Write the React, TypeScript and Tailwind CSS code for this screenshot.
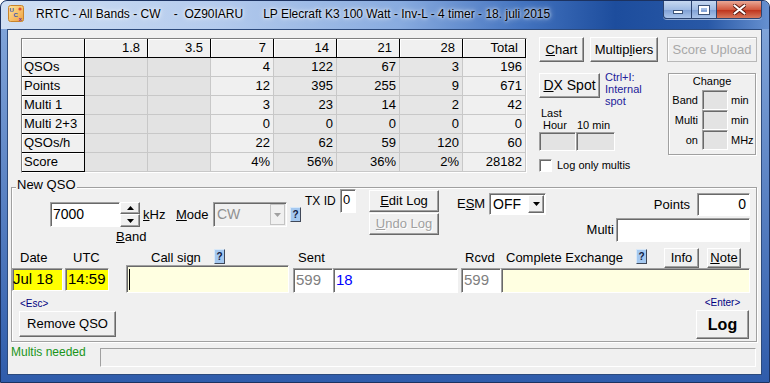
import React from "react";

const raised =
  "bg-[#f0f0f0] border border-t-white border-l-white border-r-[#696969] border-b-[#696969] shadow-[inset_-1px_-1px_0_#a0a0a0]";
const sunken =
  "border border-t-[#a0a0a0] border-l-[#a0a0a0] border-r-white border-b-white shadow-[inset_1px_1px_0_#696969]";
const etched = "border border-[#a0a0a0] shadow-[inset_1px_1px_0_#fff,1px_1px_0_#fff]";
const fixedCell =
  "h-[19px] flex items-center bg-[#f0f0f0] border-r border-b border-r-black border-b-black shadow-[inset_1px_1px_0_#fff]";
const dataCell = "h-[19px] flex items-center justify-end pr-[3px] border-r border-b border-[#c8c8c8]";
const grayText = "text-[#a0a0a0] [text-shadow:1px_1px_0_#fff]";

const bands = ["1.8", "3.5", "7", "14", "21", "28", "Total"];
const colBg = [
  "bg-[#e3e3e3]",
  "bg-[#e3e3e3]",
  "bg-[#f0f0f0]",
  "bg-[#e6e6e6]",
  "bg-[#e6e6e6]",
  "bg-[#e6e6e6]",
  "bg-[#f0f0f0]",
];

const stats = [
  { label: "QSOs", vals: ["", "", "4", "122", "67", "3", "196"] },
  { label: "Points", vals: ["", "", "12", "395", "255", "9", "671"] },
  { label: "Multi 1", vals: ["", "", "3", "23", "14", "2", "42"] },
  { label: "Multi 2+3", vals: ["", "", "0", "0", "0", "0", "0"] },
  { label: "QSOs/h", vals: ["", "", "22", "62", "59", "120", "60"] },
  { label: "Score", vals: ["", "", "4%", "56%", "36%", "2%", "28182"] },
];

function Help({ className = "" }: { className?: string }) {
  return (
    <div
      className={`w-[11px] h-[15px] shrink-0 flex items-center justify-center bg-[#a4c8f0] border border-t-[#d8e8f8] border-l-[#d8e8f8] border-r-[#404858] border-b-[#404858] text-[10px] font-bold leading-none text-[#101840] ${className}`}
    >
      ?
    </div>
  );
}

function Arrow({ color = "#000" }: { color?: string }) {
  return (
    <svg width="7" height="4" viewBox="0 0 7 4">
      <path d="M0 0h7L3.5 4z" fill={color} />
    </svg>
  );
}

function TitleBar() {
  return (
    <div className="h-[28px] flex items-start shrink-0 rounded-t-[6px] bg-[linear-gradient(90deg,#d0dff3_0%,#b4cbed_28%,#88abdf_52%,#4373bf_68%,#1d4d9d_80%,#2858a6_92%,#6690d0_100%)]">
      <svg className="ml-[7px] mt-[4px]" width="16" height="17" viewBox="0 0 16 17">
        <defs>
          <linearGradient id="ic" x1="0" y1="0" x2="1" y2="1">
            <stop offset="0" stopColor="#fde59a" />
            <stop offset="1" stopColor="#f0a040" />
          </linearGradient>
        </defs>
        <rect x="0.5" y="0.5" width="15" height="16" rx="2" fill="url(#ic)" stroke="#c8842c" />
        <circle cx="12" cy="4" r="1.6" fill="#e04830" />
        <text x="1.5" y="7" fontSize="6" fontWeight="bold" fill="#3454b4" fontFamily="Liberation Sans">U</text>
        <text x="5.5" y="12" fontSize="6" fontWeight="bold" fill="#3454b4" fontFamily="Liberation Sans">C</text>
        <text x="10.5" y="16" fontSize="6" fontWeight="bold" fill="#7a2c9c" fontFamily="Liberation Sans">x</text>
      </svg>
      <div className="ml-[12px] mt-[6px] text-[12px] leading-[14px] whitespace-pre [text-shadow:0_0_6px_#fff,0_0_3px_#fff]">
        {"RRTC - All Bands - CW    -  OZ90IARU      LP Elecraft K3 100 Watt - Inv-L - 4 timer - 18. juli 2015"}
      </div>
      <div className="ml-auto mr-[7px] flex h-[18px] rounded-b-[4px] border border-t-0 border-[#2c4470] overflow-hidden shadow-[0_1px_0_rgba(255,255,255,0.5)]">
        <div className="w-[28px] h-full flex items-end justify-center pb-[4px] border-r border-[#2c4470] bg-[linear-gradient(#c6d8f0,#a0bbe3_50%,#7e9fd4_51%,#aac4ea)]">
          <div className="w-[10px] h-[4px] bg-white border border-[#3c5378]" />
        </div>
        <div className="w-[25px] h-full flex items-center justify-center border-r border-[#2c4470] bg-[linear-gradient(#c6d8f0,#a0bbe3_50%,#7e9fd4_51%,#aac4ea)]">
          <div className="w-[10px] h-[8px] border-2 border-white shadow-[0_0_0_1px_#3c5378]" />
        </div>
        <div className="w-[44px] h-full flex items-center justify-center bg-[linear-gradient(#e9a896,#d25a40_50%,#bd2f18_51%,#d77a5e)]">
          <svg width="13" height="11" viewBox="0 0 13 11">
            <path d="M1.5 1.5l10 8M11.5 1.5l-10 8" stroke="#5a1a10" strokeWidth="4" strokeLinecap="round" />
            <path d="M1.5 1.5l10 8M11.5 1.5l-10 8" stroke="#fff" strokeWidth="2.2" strokeLinecap="round" />
          </svg>
        </div>
      </div>
    </div>
  );
}

function StatsTable() {
  return (
    <div className="ml-[13px] mt-[8px] self-start grid grid-cols-[repeat(8,63px)] border border-t-[#808080] border-l-[#808080] border-r-white border-b-white">
      <div className={fixedCell} />
      {bands.map((b) => (
        <div key={b} className={`${fixedCell} justify-end pr-[7px]`}>
          {b}
        </div>
      ))}
      {stats.map((r) => (
        <React.Fragment key={r.label}>
          <div className={`${fixedCell} pl-[2px]`}>{r.label}</div>
          {r.vals.map((v, i) => (
            <div key={i} className={`${dataCell} ${colBg[i]}`}>
              {v}
            </div>
          ))}
        </React.Fragment>
      ))}
    </div>
  );
}

function RightPanel() {
  return (
    <div className="ml-[12px] mt-[7px] w-[218px]">
      <div className="flex">
        <div className={`${raised} w-[45px] h-[25px] flex items-center justify-center`}>
          <u>C</u>hart
        </div>
        <div className={`${raised} ml-[6px] w-[68px] h-[25px] flex items-center justify-center`}>
          Multip<u>l</u>iers
        </div>
        <div className="ml-[9px] w-[90px] h-[25px] flex items-center justify-center border border-[#b8b8b8] shadow-[inset_1px_1px_0_#fff] text-[#a8a8a8]">
          Score Upload
        </div>
      </div>
      <div className="flex mt-[11px]">
        <div className="w-[129px]">
          <div className="flex h-[25px]">
            <div className={`${raised} w-[61px] h-[25px] flex items-center justify-center text-[14px]`}>
              <u>D</u>X Spot
            </div>
            <div className="ml-[5px] -mt-[2px] text-[11px] leading-[12px] text-[#22229a]">
              Ctrl+I:
              <br />
              Internal
              <br />
              spot
            </div>
          </div>
          <div className="mt-[9px] pl-[2px] text-[11px] leading-[12px]">Last</div>
          <div className="flex text-[11px] leading-[12px]">
            <span className="w-[38px] pl-[4px]">Hour</span>
            <span>10 min</span>
          </div>
          <div className="flex mt-[1px]">
            <div className={`${sunken} w-[37px] h-[19px] bg-[#e3e3e3]`} />
            <div className={`${sunken} w-[39px] h-[19px] bg-[#e3e3e3]`} />
          </div>
          <div className="flex items-center mt-[8px]">
            <div className={`${sunken} w-[13px] h-[13px] bg-white`} />
            <span className="ml-[5px] text-[11px] leading-[13px]">Log only multis</span>
          </div>
        </div>
        <div className={`${etched} w-[88px] h-[82px] text-[11px] leading-[12px]`}>
          <div className="text-center pt-[1px]">Change</div>
          <div className="mt-[3px]">
            {[
              ["Band", "min"],
              ["Multi", "min"],
              ["on", "MHz"],
            ].map(([l, u]) => (
              <div key={l} className="flex items-center h-[20px]">
                <span className="w-[33px] text-right pr-[4px]">{l}</span>
                <div className={`${sunken} w-[26px] h-[20px] bg-[#e3e3e3]`} />
                <span className="ml-[3px]">{u}</span>
              </div>
            ))}
          </div>
        </div>
      </div>
    </div>
  );
}

function NewQso() {
  return (
    <div className={`relative ml-[3px] w-[746px] h-[155px] ${etched}`}>
      <span className="absolute left-[4px] -top-[11px] px-[1px] bg-[#f0f0f0] leading-[16px]">New QSO</span>

      {/* frequency, mode, tx id, log buttons, esm, points */}
      <div className="flex h-[60px]">
        <div className="w-[164px] pl-[38px] pt-[14px]">
          <div className="flex items-center">
            <div className={`${sunken} w-[70px] h-[25px] bg-white flex items-center pl-[2px] text-[14px]`}>7000</div>
            <div className="w-[20px] h-[25px] flex flex-col">
              <div className={`${raised} h-[12px] flex items-center justify-center`}>
                <svg width="7" height="4" viewBox="0 0 7 4">
                  <path d="M0 4h7L3.5 0z" fill="#000" />
                </svg>
              </div>
              <div className={`${raised} h-[13px] flex items-center justify-center`}>
                <Arrow />
              </div>
            </div>
            <span className="ml-[3px]">
              <u>k</u>Hz
            </span>
          </div>
          <div className="ml-[66px] mt-[3px] leading-[14px]">
            <u>B</u>and
          </div>
        </div>

        <div className="w-[129px] pt-[14px] flex items-start">
          <div className="w-[37px] h-[25px] flex items-center">
            <u>M</u>ode
          </div>
          <div className={`${sunken} w-[74px] h-[25px] bg-[#f0f0f0] flex items-center`}>
            <span className="flex-1 pl-[3px] text-[14px] text-[#909090]">CW</span>
            <div className="w-[15px] h-[21px] mr-[1px] flex items-center justify-center border border-[#c4c4c4] bg-[#f0f0f0]">
              <Arrow color="#a0a0a0" />
            </div>
          </div>
          <Help className="ml-[3px] mt-[5px]" />
        </div>

        <div className="w-[64px] pt-[1px] flex items-start">
          <span className="w-[35px] mt-[5px] leading-[14px] text-[12px]">TX ID</span>
          <div className={`${sunken} w-[16px] h-[24px] bg-white pl-[2px] pt-[2px] text-[13px] leading-[16px]`}>0</div>
        </div>

        <div className="w-[88px] pt-[2px] flex flex-col">
          <div className={`${raised} w-[70px] h-[22px] flex items-center justify-center`}>
            <u>E</u>dit Log
          </div>
          <div className={`${raised} mt-[1px] w-[70px] h-[22px] flex items-center justify-center ${grayText}`}>
            <u>U</u>ndo Log
          </div>
        </div>

        <div className="w-[126px] pt-[5px] flex items-start">
          <div className="w-[32px] h-[22px] flex items-center">
            E<u>S</u>M
          </div>
          <div className={`${sunken} w-[57px] h-[22px] bg-white flex items-center`}>
            <span className="flex-1 pl-[3px] text-[14px]">OFF</span>
            <div className={`${raised} w-[16px] h-[18px] mr-[1px] flex items-center justify-center`}>
              <Arrow />
            </div>
          </div>
        </div>

        <div className="w-[167px] pt-[5px] flex flex-col">
          <div className="flex justify-end items-center">
            <span className="mr-[7px]">Points</span>
            <div className={`${sunken} w-[53px] h-[23px] bg-white flex items-center justify-end pr-[3px] text-[14px]`}>0</div>
          </div>
          <div className="mt-[2px] flex justify-end items-center">
            <span className="mr-[2px]">Multi</span>
            <div className={`${sunken} w-[134px] h-[24px] bg-white`} />
          </div>
        </div>
      </div>

      {/* entry fields */}
      <div className="flex">
        <div className="w-[51px]">
          <div className="h-[20px] flex items-center pl-[8px]">Date</div>
          <div className={`${sunken} h-[23px] bg-[#ffff00] flex items-center text-[15px]`}>Jul 18</div>
        </div>
        <div className="ml-[2px] w-[44px]">
          <div className="h-[20px] flex items-center pl-[8px]">UTC</div>
          <div className={`${sunken} h-[23px] bg-[#ffff00] flex items-center pl-[2px] text-[15px]`}>14:59</div>
        </div>
        <div className="ml-[17px] w-[163px]">
          <div className="h-[20px] flex items-center pl-[25px]">
            <span className="w-[63px]">Call sign</span>
            <Help className="-mt-[3px]" />
          </div>
          <div className={`${sunken} -mt-[3px] h-[28px] bg-[#ffffe1] flex items-center pl-[2px]`}>
            <div className="w-[1px] h-[21px] bg-black" />
          </div>
        </div>
        <div className="ml-[4px] w-[165px]">
          <div className="h-[20px] flex items-center pl-[5px]">Sent</div>
          <div className="flex">
            <div className={`${sunken} w-[40px] h-[25px] bg-white flex items-center pl-[2px] text-[15px] text-[#808080]`}>599</div>
            <div className={`${sunken} w-[125px] h-[25px] bg-white flex items-center pl-[2px] text-[15px] text-[#0000ff]`}>18</div>
          </div>
        </div>
        <div className="ml-[3px] w-[289px]">
          <div className="h-[20px] flex items-center">
            <span className="w-[45px] pl-[4px]">Rcvd</span>
            <span className="w-[130px]">Complete Exchange</span>
            <Help className="-mt-[3px]" />
            <div className={`${raised} ml-[17px] w-[35px] h-[20px] flex items-center justify-center`}>Info</div>
            <div className={`${raised} ml-[8px] w-[34px] h-[20px] flex items-center justify-center`}>
              <u>N</u>ote
            </div>
          </div>
          <div className="flex">
            <div className={`${sunken} w-[40px] h-[25px] bg-white flex items-center pl-[2px] text-[15px] text-[#808080]`}>599</div>
            <div className={`${sunken} w-[249px] h-[25px] bg-[#ffffe1]`} />
          </div>
        </div>
      </div>

      {/* actions */}
      <div className="flex h-[47px]">
        <div className="ml-[7px] flex flex-col">
          <span className="pt-[5px] pl-[1px] text-[10px] leading-[11px] text-[#000080]">&lt;Esc&gt;</span>
          <div className={`${raised} mt-[2px] w-[97px] h-[26px] flex items-center justify-center`}>Remove QSO</div>
        </div>
        <div className="ml-auto mr-[7px] flex flex-col items-center">
          <span className="pt-[4px] text-[10px] leading-[11px] text-[#000080]">&lt;Enter&gt;</span>
          <div className={`${raised} mt-[2px] w-[53px] h-[29px] flex items-center justify-center text-[16px] font-bold`}>Log</div>
        </div>
      </div>
    </div>
  );
}

export default function App() {
  return (
    <div className="w-[770px] h-[383px] flex flex-col overflow-hidden rounded-t-[7px] border border-[#1c3260] bg-[linear-gradient(180deg,#86a9dc,#2f5cab)] font-['Liberation_Sans',Arial,sans-serif] text-[13px] text-black">
      <TitleBar />
      <div className="flex-1 pl-[6px] pr-[7px] pb-[7px]">
        <div className="h-full border border-[#2c4a7c] bg-[#f0f0f0] flex flex-col">
          <div className="h-[157px] flex shrink-0">
            <StatsTable />
            <RightPanel />
          </div>
          <NewQso />
          <div className="flex items-start">
            <span className="w-[92px] pl-[3px] mt-[3px] text-[12px] leading-[14px] text-[#1a951a]">Multis needed</span>
            <div className={`${sunken} mt-[6px] w-[656px] h-[19px] shadow-none`} />
          </div>
        </div>
      </div>
    </div>
  );
}
